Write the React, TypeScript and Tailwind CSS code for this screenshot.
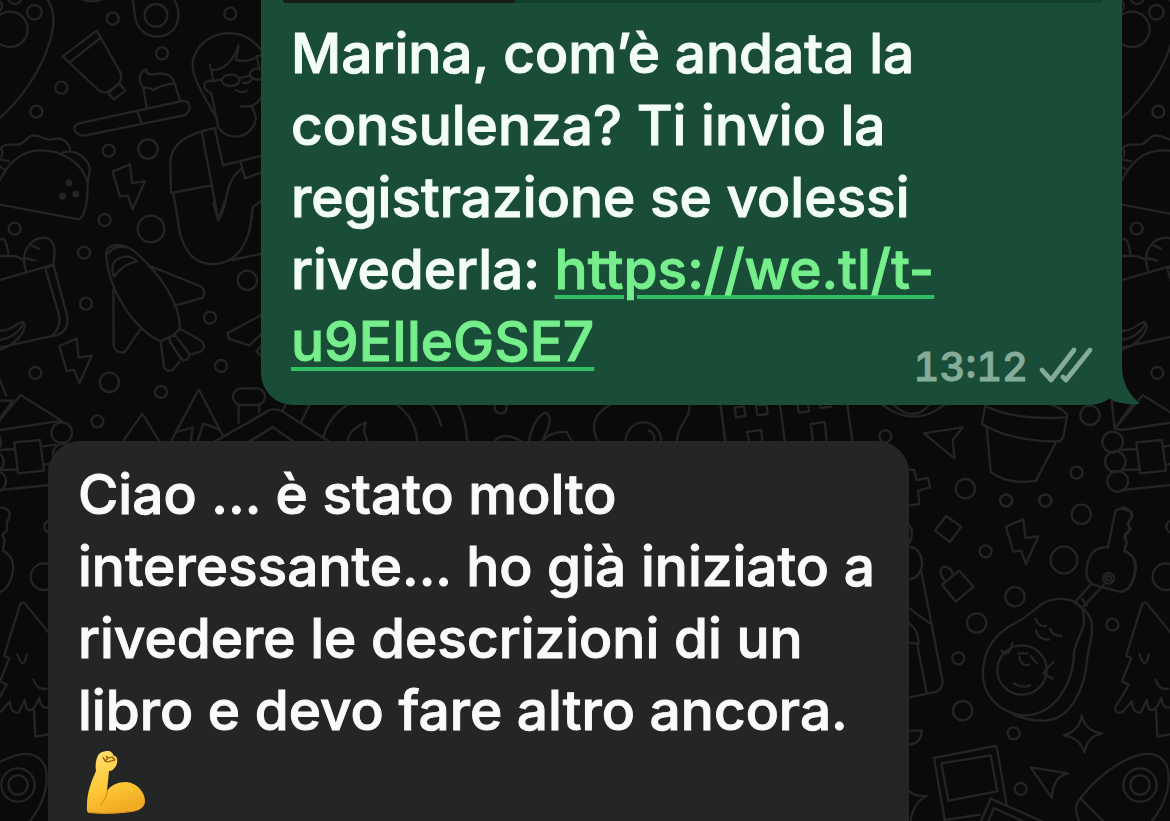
const Dots = ({ items }: { items: number[][] }) => (
  <>
    {items.map(([x, y, r]) => (
      <circle key={`${x}-${y}-${r}`} cx={x} cy={y} r={r} />
    ))}
  </>
);

const bolt = 'M0 22L52 0L58 56L97 51L60 134L45 94L22 97Z';

/* Doodles are drawn on a grid three times finer than the page. */
function EdgeDoodles() {
  return (
    <>
      <g>
        <Dots
          items={[
            [103, 37, 22], [45, -8, 20], [30, 88, 53], [-14, 18, 20], [338, 56, 18], [468, 46, 34],
            [691, 41, 18], [486, 160, 18], [184, 263, 18], [109, 335, 18], [326, 452, 18],
            [444, 447, 29], [314, 660, 18], [453, 687, 40],
          ]}
        />
        <path d="M140 -5C176 46 158 110 132 172C98 250 45 312 0 354M250 0Q276 8 302 0M398 -5L406 56C424 128 516 124 532 66Q542 32 522 -2" />
        <path d="M188 169L290 92L360 215Q370 238 352 256L322 276Q306 280 292 267ZM208 188L301 114M325 280L357 250L376 271L342 298Z" />
        <path d="M440 322L430 264C412 240 418 216 439 208Q438 228 468 222C498 216 518 228 524 250L540 302M428 264Q445 260 460 270C480 256 500 254 524 250" />
        <path d="M237 370L547 303C574 300 576 334 552 346L256 406C230 412 208 380 237 370ZM413 337L425 370" />
        <path d="M0 540C28 484 68 451 122 451C190 451 250 492 263 550C264 596 256 654 236 658L0 614M0 447C14 430 30 434 56 434C76 430 80 406 104 406C130 408 132 424 160 418C188 408 212 432 210 456M186 458C232 444 276 484 268 520L263 548M4 470Q12 450 0 446M0 478L27 484M0 500L12 508" />
        <path d="M653 360C606 280 568 220 580 176C600 112 664 92 712 102Q764 112 800 176M630 194L640 240L616 246Q606 268 634 280L655 382C690 432 762 410 768 352L755 318M634 210C670 212 700 184 716 136L708 180Q745 190 780 166M770 168L778 208M637 244L664 238M718 234L748 228M730 248Q748 252 754 238M708 270Q724 282 740 272M722 320L755 318Q780 306 790 282" />
        <ellipse cx="692" cy="241" rx="27" ry="17" />
        <ellipse cx="776" cy="222" rx="27" ry="17" />
        <path d="M648 384C566 398 512 430 511 488L513 579L635 556M520 579L540 700C560 780 610 800 660 790C710 780 752 730 755 640M606 400L655 660C690 610 666 556 722 508M645 388L669 496L790 466M722 488L735 535L790 515M755 660L758 622L790 598M640 610L655 662L676 598" />
        <path transform="translate(338 493)" d={bolt} />
        <circle cx="207" cy="548" r="7" fill="#242424" />
        <circle cx="188" cy="589" r="7" fill="#242424" />
        <circle cx="227" cy="582" r="7" fill="#242424" />
      </g>
      <g transform="translate(0 630)">
        <Dots
          items={[
            [44, 56, 18], [252, 128, 18], [258, 281, 18], [742, 211, 29], [630, 323, 18], [663, 468, 18],
            [483, 546, 18], [328, 517, 29], [292, 634, 18], [106, 489, 18],
          ]}
        />
        <path d="M0 210L160 164L136 176L178 318Q182 354 158 374M160 164L202 320Q206 362 176 374L0 412M78 182C56 118 100 78 142 84C170 96 164 132 160 164M94 106L117 116M74 144L106 152M70 150Q50 136 26 138L0 138M0 90Q18 74 26 138M0 362C34 366 46 338 68 336C88 350 56 400 0 420M0 390Q48 382 70 342" />
        <path d="M318 132C320 98 370 96 408 128C470 184 540 270 540 356L520 376L482 394C400 356 324 240 318 132ZM322 132Q346 104 372 112M342 200Q370 160 412 154Q382 128 348 150Q330 168 342 200ZM445 166L600 228Q620 240 608 264L522 288M340 238L341 408Q348 432 374 426L424 354M482 394L492 472Q502 488 518 480L538 456M540 356L606 394Q620 414 600 426L570 434M508 382Q520 370 532 384L568 432Q568 454 546 450L510 396Z" />
        <path transform="translate(178 386)" d={bolt} />
        <path d="M790 312L682 370L686 386L748 406L790 366M790 400L770 424L790 445M696 150L790 130" />
        <path d="M364 700L427 611L482 700M510 700L596 538L670 680M530 666L578 652L572 700M590 700L610 640L658 658M635 700L800 606M740 700L820 650M716 584V638M778 584V606" />
        <rect x="699" y="535" width="96" height="50" rx="25" />
      </g>
      <g transform="translate(0 1140)">
        <path d="M0 120L62 45L185 122L0 150M0 120L-22 146L0 150M0 62L38 62L-22 146M0 62L-31 62L-22 146M0 0L18 46M43 187L120 180L132 272L54 280ZM0 210L43 207M122 200L166 194M0 270L54 268M130 254L160 250M0 330L150 315" />
        <circle cx="185" cy="158" r="31" />
        <circle cx="190" cy="222" r="31" />
        <circle cx="-28" cy="186" r="31" />
        <circle cx="-20" cy="245" r="31" />
        <circle cx="-13" cy="304" r="31" />
        <path d="M0 382Q34 386 28 410L20 430L22 450L8 464L14 484L8 512C40 526 44 556 36 588Q22 632 0 636" />
        <circle cx="151" cy="440" r="18" />
        <circle cx="132" cy="590" r="40" />
        <path d="M190 812L78 674Q68 660 60 674L12 828L28 834L0 904L20 914L0 950L-20 980Q-24 1006 4 994L30 964Q30 1000 56 998L74 960Q80 1010 106 978L118 954Q122 992 150 980M52 822Q70 876 80 824M100 898Q112 932 140 926M102 990L106 1070L150 1062" />
        <circle cx="54" cy="1215" r="50" />
        <circle cx="54" cy="1215" r="29" />
        <path d="M0 1146C60 1114 112 1108 136 1160Q154 1240 90 1323M-125 1255Q-70 1184 0 1146M-125 1255L-50 1330M-125 1255Q-150 1280 -126 1330" />
      </g>
    </>
  );
}

function MiddleDoodles() {
  return (
    <>
      <g transform="translate(750 1140)">
        <path d="M155 124L180 70M220 170Q240 105 300 70M435 70Q500 116 502 190M540 70Q565 100 574 138M622 70Q650 120 652 190M290 190Q300 142 348 128Q334 150 356 190M0 125L54 92Q72 84 94 92L245 190M0 184L68 141L138 190M100 88L110 68M730 190Q752 150 812 182M836 190Q850 112 886 98Q918 110 872 190Q900 152 950 156L966 184M1088 70C1034 96 1016 140 1048 190M1126 190C1126 106 1236 106 1234 190M1196 152Q1220 160 1210 190M1318 70C1324 116 1276 140 1282 190M1411 70L1428 190" />
        <circle cx="752" cy="83" r="18" />
      </g>
      <g transform="translate(2100 1170)">
        <Dots
          items={[
            [556, 139, 18], [796, 296, 29], [918, 331, 18], [1036, 331, 18], [1130, 248, 18], [1170, 76, 29],
          ]}
        />
        <path d="M62 44L76 160M240 44L255 160M442 44L458 160M104 53L132 49L137 78L108 82ZM168 46L200 44L203 72L172 76ZM292 44L297 68L327 64L324 44M360 44L362 54L394 50M150 160L140 126L184 120L188 160M340 160L332 102L374 96L381 160M546 44Q642 116 734 44M580 44Q640 100 688 44" />
        <path d="M672 130L788 112L758 150L764 206ZM856 44L846 102L860 112L872 246Q926 286 1008 272L1070 152M860 50Q950 92 1094 82M850 104Q940 156 1080 154L1090 142L1102 74Q1080 50 1050 44M620 238L642 240L650 270L684 264L690 292L654 302L658 342L628 346" />
      </g>
      <g transform="translate(2700 1470)">
        <Dots
          items={[
            [319, 32, 18], [436, 32, 18], [544, 73, 29], [257, 184, 18], [492, 210, 40],
            [345, 320, 29], [230, 399, 29], [175, 505, 18], [188, 662, 29], [637, 404, 18], [341, 730, 18],
            [362, 897, 18], [626, 265, 16], [626, 265, 7], [366, 540, 74],
          ]}
        />
        <path transform="translate(318 88)" d={bolt} />
        <path d="M138 78L184 110L150 156L105 122ZM126 284L178 242L220 290L168 335ZM134 272Q110 240 132 230Q158 232 158 256M28 105Q44 128 28 160M28 170Q66 176 66 225Q60 264 28 268M64 245L128 574Q126 600 105 606L28 622M28 356L90 400M28 400Q56 420 56 462L28 458M52 464L80 608M28 722L66 722Q64 760 28 764" />
        <path d="M624 172L646 64Q654 54 672 58Q700 62 696 82L682 102L692 118L672 142L680 160L672 184Q716 198 706 246Q696 308 654 304L580 284Q552 268 562 226Q572 168 624 172ZM570 286L524 338L548 352L612 284M546 326L560 346" />
        <path d="M420 346C460 316 534 320 550 366C560 420 530 440 522 486C522 570 470 680 366 676C290 666 240 606 250 530C260 444 320 410 370 386ZM548 354C594 392 572 450 562 500C556 600 510 692 430 692Q384 692 340 674M406 386Q416 412 438 408M408 422Q416 452 448 448M450 416Q456 438 484 438M356 490L382 490M358 500Q362 530 388 524M392 498L410 520M342 580Q366 596 390 586M304 482Q326 506 338 458M460 516Q440 536 430 550L458 566" />
        <path d="M545 676Q556 724 606 730Q558 742 554 788Q538 742 492 736Q540 720 545 676ZM392 832L504 850Q458 860 456 924ZM28 904Q44 920 80 918Q42 936 32 990" />
        <path d="M136 1000L102 804L284 768Q290 768 292 780L320 944M124 820L272 796L292 904L145 932ZM136 990L240 974M240 1000L272 926L440 1000M262 1000L282 954L382 1000" />
      </g>
    </>
  );
}

function Wallpaper() {
  return (
    <svg
      aria-hidden="true"
      className="absolute top-0 left-0 h-[821px] w-[1170px]"
      viewBox="0 0 1170 821"
      fill="none"
      stroke="#242424"
      strokeLinecap="round"
      strokeLinejoin="round"
    >
      <g transform="scale(.33333)" strokeWidth="7">
        <EdgeDoodles />
        <MiddleDoodles />
      </g>
      <g transform="translate(1122 0) scale(.33333)" strokeWidth="7">
        <EdgeDoodles />
      </g>
    </svg>
  );
}

function FlexedArm() {
  return (
    <svg role="img" aria-label="💪" className="mb-2 ml-2 inline-block h-16 w-16 align-middle" viewBox="0 0 64 64">
      <defs>
        <linearGradient id="skin" x1="0" y1="0" x2="0.3" y2="1">
          <stop offset="0" stopColor="#ffdf73" />
          <stop offset="0.6" stopColor="#ffca38" />
          <stop offset="1" stopColor="#f2ac24" />
        </linearGradient>
      </defs>
      <path
        d="M13 3C15 1 20-.5 23 0C26 .5 27 3 28 5C32 5 32 11 30 15C28 18 26 20 23 20L21 40C25 34 32 31 40 31C52 32 59 42 59 50C59 57 52 60 45 61C32 63 14 63 3 62C0 61 1 57 1 54C1 42 5 31 10 20C9 14 10 7 13 3Z"
        fill="url(#skin)"
      />
      <path d="M21 40C22 46 17 49 15 54M3 61C16 63 33 62 45 60" fill="none" stroke="#d9911c" strokeWidth="1.2" strokeLinecap="round" />
      <path d="M17 6L19 10L22 7L20 5M22 7L26 6L29 9L25 10L22 11L19 10" fill="none" stroke="#8a5408" strokeWidth="1.2" strokeLinejoin="round" />
    </svg>
  );
}

function ReadTicks() {
  return (
    <svg
      role="img"
      aria-label="Consegnato"
      className="h-9 w-[54px] overflow-visible"
      viewBox="0 0 54 36"
      fill="none"
      stroke="currentColor"
      strokeWidth="4.8"
      strokeLinecap="round"
      strokeLinejoin="round"
    >
      <path d="M2 21L11 31L34 1M23 28L26 31L50 1" />
    </svg>
  );
}

export default function App() {
  return (
    <main className="relative h-screen overflow-hidden bg-[#0a0a0a] font-['Inter','Liberation_Sans',sans-serif] text-[55px] leading-[72px] font-medium text-[#fafafa] [-webkit-text-stroke:1px]">
      <Wallpaper />
      <div className="relative flex flex-col gap-9 px-12">
        <article className="relative w-full max-w-[861px] self-end rounded-b-[32px] bg-[#194d38] pr-5 pb-5 pl-[30px]">
          <div className="-ml-2 flex h-[3px] overflow-hidden rounded-b-full bg-[#123e2c]">
            <div className="w-[232px] bg-[#171c18]" />
          </div>
          <div className="grid pt-[14px] text-[#f3fdf6]">
            <p className="col-start-1 row-start-1 pb-2">
              Marina, com’è andata la consulenza? Ti invio la registrazione se volessi rivederla:{' '}
              <a
                href="https://we.tl/t-u9EIleGSE7"
                className="text-[#75ee8b] underline decoration-[#30bf62] decoration-4 underline-offset-[6px]"
              >
                https://we.tl/t-u9EIleGSE7
              </a>
            </p>
            <div className="col-start-1 row-start-1 mr-2 flex items-center gap-3 self-end justify-self-end text-[40px] leading-9 text-[#85ac99]">
              <time className="tabular-nums">13:12</time>
              <ReadTicks />
            </div>
          </div>
          <svg aria-hidden="true" className="absolute -right-[18px] bottom-0 h-9 w-12" viewBox="0 0 48 36" fill="#194d38">
            <path d="M30 0C31 15 37 25 48 35C35 36 25 34 17 29L0 20V0Z" />
          </svg>
        </article>
        <article className="w-full max-w-[861px] self-start rounded-t-[32px] bg-[#242625] pt-[17px] pr-5 pb-8 pl-[30px]">
          <p>
            Ciao ... è stato molto interessante... ho già iniziato a rivedere le descrizioni di un libro e devo fare
            altro ancora. <FlexedArm />
          </p>
        </article>
      </div>
    </main>
  );
}
